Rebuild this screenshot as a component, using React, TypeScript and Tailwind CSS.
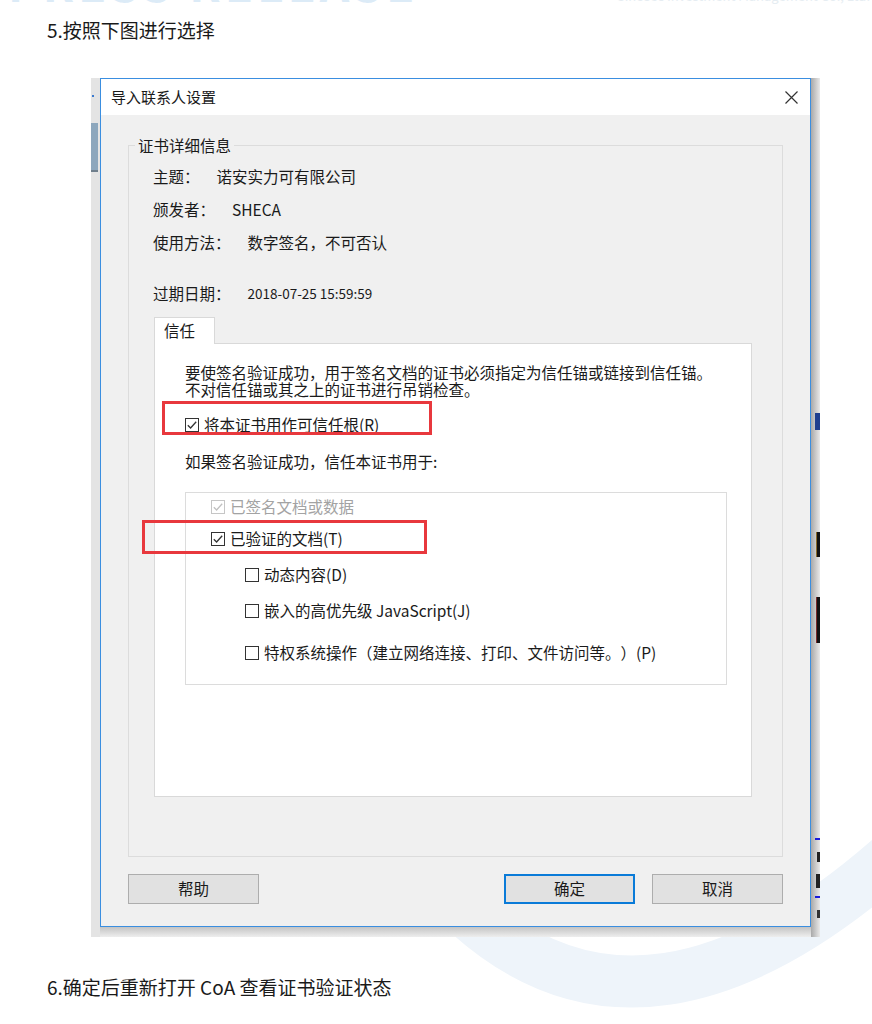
import clsx from "clsx";

function Box({ checked, disabled }: { checked?: boolean; disabled?: boolean }) {
  return (
    <span
      className={clsx(
        "flex h-[14px] w-[14px] shrink-0 items-center justify-center border bg-white",
        disabled ? "border-[#c6c6c6]" : "border-[#333333]"
      )}
    >
      {checked && (
        <svg width="12" height="12" viewBox="0 0 12 12">
          <path
            d="M1.8 6.2 L4.6 9 L10.2 2.8"
            fill="none"
            stroke={disabled ? "#c0c0c0" : "#333333"}
            strokeWidth="1.3"
          />
        </svg>
      )}
    </span>
  );
}

function Option({
  label,
  checked,
  disabled,
  className,
  mark,
}: {
  label: string;
  checked?: boolean;
  disabled?: boolean;
  className?: string;
  mark?: string;
}) {
  return (
    <div className={clsx("relative flex h-[22px] items-center gap-[5px]", className)}>
      <Box checked={checked} disabled={disabled} />
      <span className={disabled ? "text-[#a3a3a3]" : "text-[#1a1a1a]"}>{label}</span>
      {mark && <span className={clsx("absolute border-[3px] border-[#e8383d]", mark)} />}
    </div>
  );
}

function Row({ label, value, small }: { label: string; value: string; small?: boolean }) {
  return (
    <div className="flex h-[33px] items-center gap-[17px]">
      <span>{label}</span>
      <span className={small ? "text-[13.5px]" : ""}>{value}</span>
    </div>
  );
}

function Btn({ children, primary }: { children: string; primary?: boolean }) {
  return (
    <button
      className={clsx(
        "flex h-[30px] w-[131px] items-center justify-center bg-[#e1e1e1] text-[15.5px] text-[#1a1a1a]",
        primary ? "border-2 border-[#0a7bd8]" : "border border-[#adadad]"
      )}
    >
      {children}
    </button>
  );
}

export default function App() {
  return (
    <div className="relative h-[1024px] w-[872px] overflow-hidden bg-white font-['Noto_Sans_CJK_SC',sans-serif] [text-spacing-trim:space-all]">
      {/* faint watermark swoosh behind the page */}
      <svg className="absolute left-0 top-0" width="872" height="1024" viewBox="0 0 872 1024">
        <path
          d="M470 915 Q 650 1075 900 850"
          fill="none"
          stroke="#eef4fa"
          strokeWidth="52"
        />
      </svg>

      <div className="relative h-[78px]">
        <div className="flex h-[6px] justify-between overflow-hidden">
          <span className="-mt-[41px] ml-[8px] text-[46px] font-bold leading-[46px] tracking-[4px] text-[#dcebf7]">
            PRESS RELEASE
          </span>
          <span className="-mt-[11px] mr-[2px] text-[13px] leading-[14px] text-[#e6edf2]">
            ───────── Sinosec Investment Management Co., Ltd.
          </span>
        </div>
        <div className="ml-[47px] mt-[11px] text-[19px] leading-[26px] text-[#1a1a1a]">
          5.按照下图进行选择
        </div>
      </div>

      <div className="relative ml-[91px] flex h-[859px] w-[729px]">
        {/* left edge of captured window */}
        <div className="flex w-[9px] flex-col bg-[#e4e4e4]">
          <span className="ml-[1px] mt-[17px] h-[2px] w-[2px] bg-[#3b7bd0]" />
          <span className="mt-[26px] h-[49px] w-[7px] border-b-2 border-[#6f7f8d] bg-[#8da7bd]" />
        </div>

        <div className="flex w-[711px] flex-col">
          <div className="flex h-[849px] flex-col border border-[#3a8ee0]">
            <div className="flex h-[36px] items-center justify-between bg-white pl-[10px] pr-[12px] text-[15px] text-[#1a1a1a]">
              <span>导入联系人设置</span>
              <svg width="13" height="13" viewBox="0 0 13 13">
                <path d="M0.5 0.5 L12.5 12.5 M12.5 0.5 L0.5 12.5" stroke="#333" strokeWidth="1.2" />
              </svg>
            </div>

            <div className="flex flex-1 flex-col bg-[#f0f0f0] px-[27px] text-[15.5px] text-[#1a1a1a]">
              <fieldset className="mt-[20px] h-[722px] border border-[#dcdcdc] p-0">
                <legend className="ml-[6px] px-[3px] leading-[20px]">证书详细信息</legend>
                <div className="pl-[24px]">
                  <div className="mt-[5px]">
                    <Row label="主题：" value="诺安实力可有限公司" />
                    <Row label="颁发者：" value="SHECA" />
                    <Row label="使用方法：" value="数字签名，不可否认" />
                  </div>
                  <div className="mt-[18px]">
                    <Row label="过期日期：" value="2018-07-25 15:59:59" small />
                  </div>

                  <div className="ml-[1px] mt-[7px]">
                    <div className="relative z-10 -mb-px flex h-[27px] w-[61px] items-center border-x border-t border-[#d9d9d9] bg-white pl-[9px]">
                      信任
                    </div>
                    <div className="h-[454px] w-[598px] border border-[#d9d9d9] bg-white pl-[30px] pt-[20px]">
                      <p className="leading-[17px]">
                        要使签名验证成功，用于签名文档的证书必须指定为信任锚或链接到信任锚。
                        <br />
                        不对信任锚或其之上的证书进行吊销检查。
                      </p>
                      <Option
                        className="mt-[16px]"
                        label="将本证书用作可信任根(R)"
                        checked
                        mark="-left-[23px] -top-[13px] h-[34px] w-[270px]"
                      />
                      <div className="mt-[14px] leading-[22px]">如果签名验证成功，信任本证书用于:</div>
                      <div className="mt-[20px] h-[193px] w-[542px] border border-[#dcdcdc] bg-white pl-[25px] pt-[3px]">
                        <Option label="已签名文档或数据" checked disabled />
                        <Option
                          className="mt-[10px]"
                          label="已验证的文档(T)"
                          checked
                          mark="-left-[69px] -top-[8px] h-[34px] w-[285px]"
                        />
                        <Option className="ml-[34px] mt-[14px]" label="动态内容(D)" />
                        <Option className="ml-[34px] mt-[14px]" label="嵌入的高优先级 JavaScript(J)" />
                        <Option
                          className="ml-[34px] mt-[20px]"
                          label="特权系统操作（建立网络连接、打印、文件访问等。）(P)"
                        />
                      </div>
                    </div>
                  </div>
                </div>
              </fieldset>

              <div className="mt-[17px] flex items-center justify-between">
                <Btn>帮助</Btn>
                <div className="flex gap-[17px]">
                  <Btn primary>确定</Btn>
                  <Btn>取消</Btn>
                </div>
              </div>
            </div>
          </div>
          <div className="h-[10px] bg-linear-to-b from-[#c4c4c4] to-[#eeeeee]" />
        </div>

        {/* right edge: shadow and bits of the document behind */}
        <div className="flex w-[9px] flex-col items-end bg-linear-to-r from-[#a9a9a9] to-[#e9e9e9]">
          <span className="mt-[335px] h-[17px] w-[5px] bg-[#1f3f8f]" />
          <span className="mt-[102px] h-[25px] w-[4px] border-l border-[#8a6a2a] bg-[#111]" />
          <span className="mt-[40px] h-[46px] w-[4px] border-l border-[#7a2a2a] bg-[#111]" />
          <span className="mt-[195px] h-[2px] w-[5px] bg-[#1a1adb]" />
          <span className="mt-[12px] h-[10px] w-[3px] bg-[#222]" />
          <span className="mt-[12px] h-[14px] w-[4px] bg-[#222]" />
          <span className="mt-[8px] h-[2px] w-[5px] bg-[#1a1adb]" />
          <span className="mt-[12px] h-[8px] w-[3px] bg-[#333]" />
        </div>
      </div>

      <div className="relative ml-[47px] mt-[37px] text-[19px] leading-[26px] text-[#1a1a1a]">
        6.确定后重新打开 CoA 查看证书验证状态
      </div>
    </div>
  );
}
